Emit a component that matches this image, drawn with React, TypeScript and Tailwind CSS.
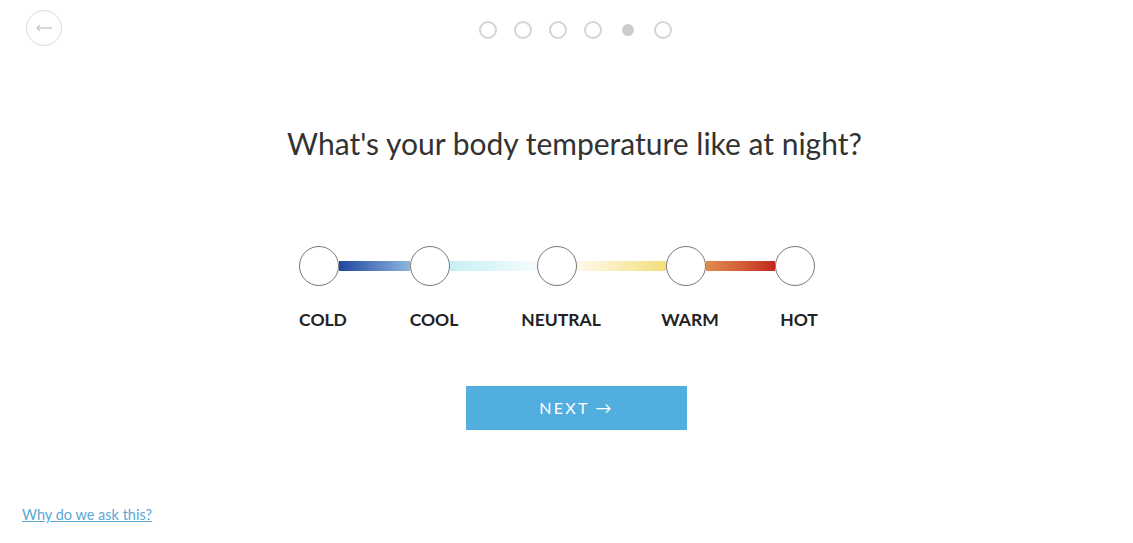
import { useState } from 'react'

const options = ['COLD', 'COOL', 'NEUTRAL', 'WARM', 'HOT']

const bars = [
    'w-[71px] bg-gradient-to-r from-[#2346a0] to-[#8fb6dc]',
    'w-[87px] bg-gradient-to-r from-[#c4f0f5] to-[#f6fcfd]',
    'w-[89px] bg-gradient-to-r from-[#fdf9ec] to-[#f4de76]',
    'w-[69px] bg-gradient-to-r from-[#e08b50] to-[#c1261e]',
]

export default function App() {
    const [selected, setSelected] = useState<number | null>(null)

    return (
        <div className="min-h-[543px] bg-white pl-4 font-['Lato','Liberation_Sans',sans-serif] text-[#333]">
            <header className="grid grid-cols-[1fr_auto_1fr] items-start pt-[10px]">
                <div>
                    <button className="ml-[10px] flex h-9 w-9 items-center justify-center rounded-full border border-[#dcdcdc]">
                        <svg width="18" height="10" viewBox="0 0 18 10" fill="none" stroke="#c8c8c8" strokeWidth="1.4">
                            <path d="M17 5H2" />
                            <path d="M5 2L2 5l3 3" />
                        </svg>
                    </button>
                </div>
                <div className="mt-[11px] ml-[2px] flex gap-[17px]">
                    {[0, 1, 2, 3, 4, 5].map((i) => (
                        <div key={i} className="flex h-[18px] w-[18px] items-center justify-center">
                            {i === 4 ? (
                                <div className="h-3 w-3 rounded-full bg-[#cccccc]" />
                            ) : (
                                <div className="h-[18px] w-[18px] rounded-full border-2 border-[#d4d4d4]" />
                            )}
                        </div>
                    ))}
                </div>
                <div />
            </header>

            <main className="flex flex-col items-center">
                <h1 className="mt-[79px] text-[30px] leading-9 text-[#333]">
                    What's your body temperature like at night?
                </h1>

                <div className="mt-[85px] mr-[35px] flex items-start">
                    {options.map((label, i) => (
                        <div key={label} className="flex items-start">
                            <div className="flex w-10 flex-col items-center">
                                <button
                                    onClick={() => setSelected(i)}
                                    className={`h-10 w-10 rounded-full border-[1.5px] border-[#777] ${selected === i ? 'bg-[#52aedf]' : 'bg-white'}`}
                                />
                                <span className="mt-[23px] whitespace-nowrap pl-2 text-[17.5px] font-bold leading-[22px] text-[#222]">
                                    {label}
                                </span>
                            </div>
                            {i < bars.length && <div className={`mt-[15px] h-[10px] ${bars[i]}`} />}
                        </div>
                    ))}
                </div>

                <button className="mt-[55px] ml-[4px] flex h-11 w-[221px] items-center justify-center bg-[#52aedf] text-[16px] tracking-[0.14em] text-white">
                    NEXT →
                </button>
            </main>

            <a href="#" className="ml-[6px] mt-[76px] inline-block text-[14.5px] leading-[18px] text-[#5aa6d6] underline">
                Why do we ask this?
            </a>
        </div>
    )
}
